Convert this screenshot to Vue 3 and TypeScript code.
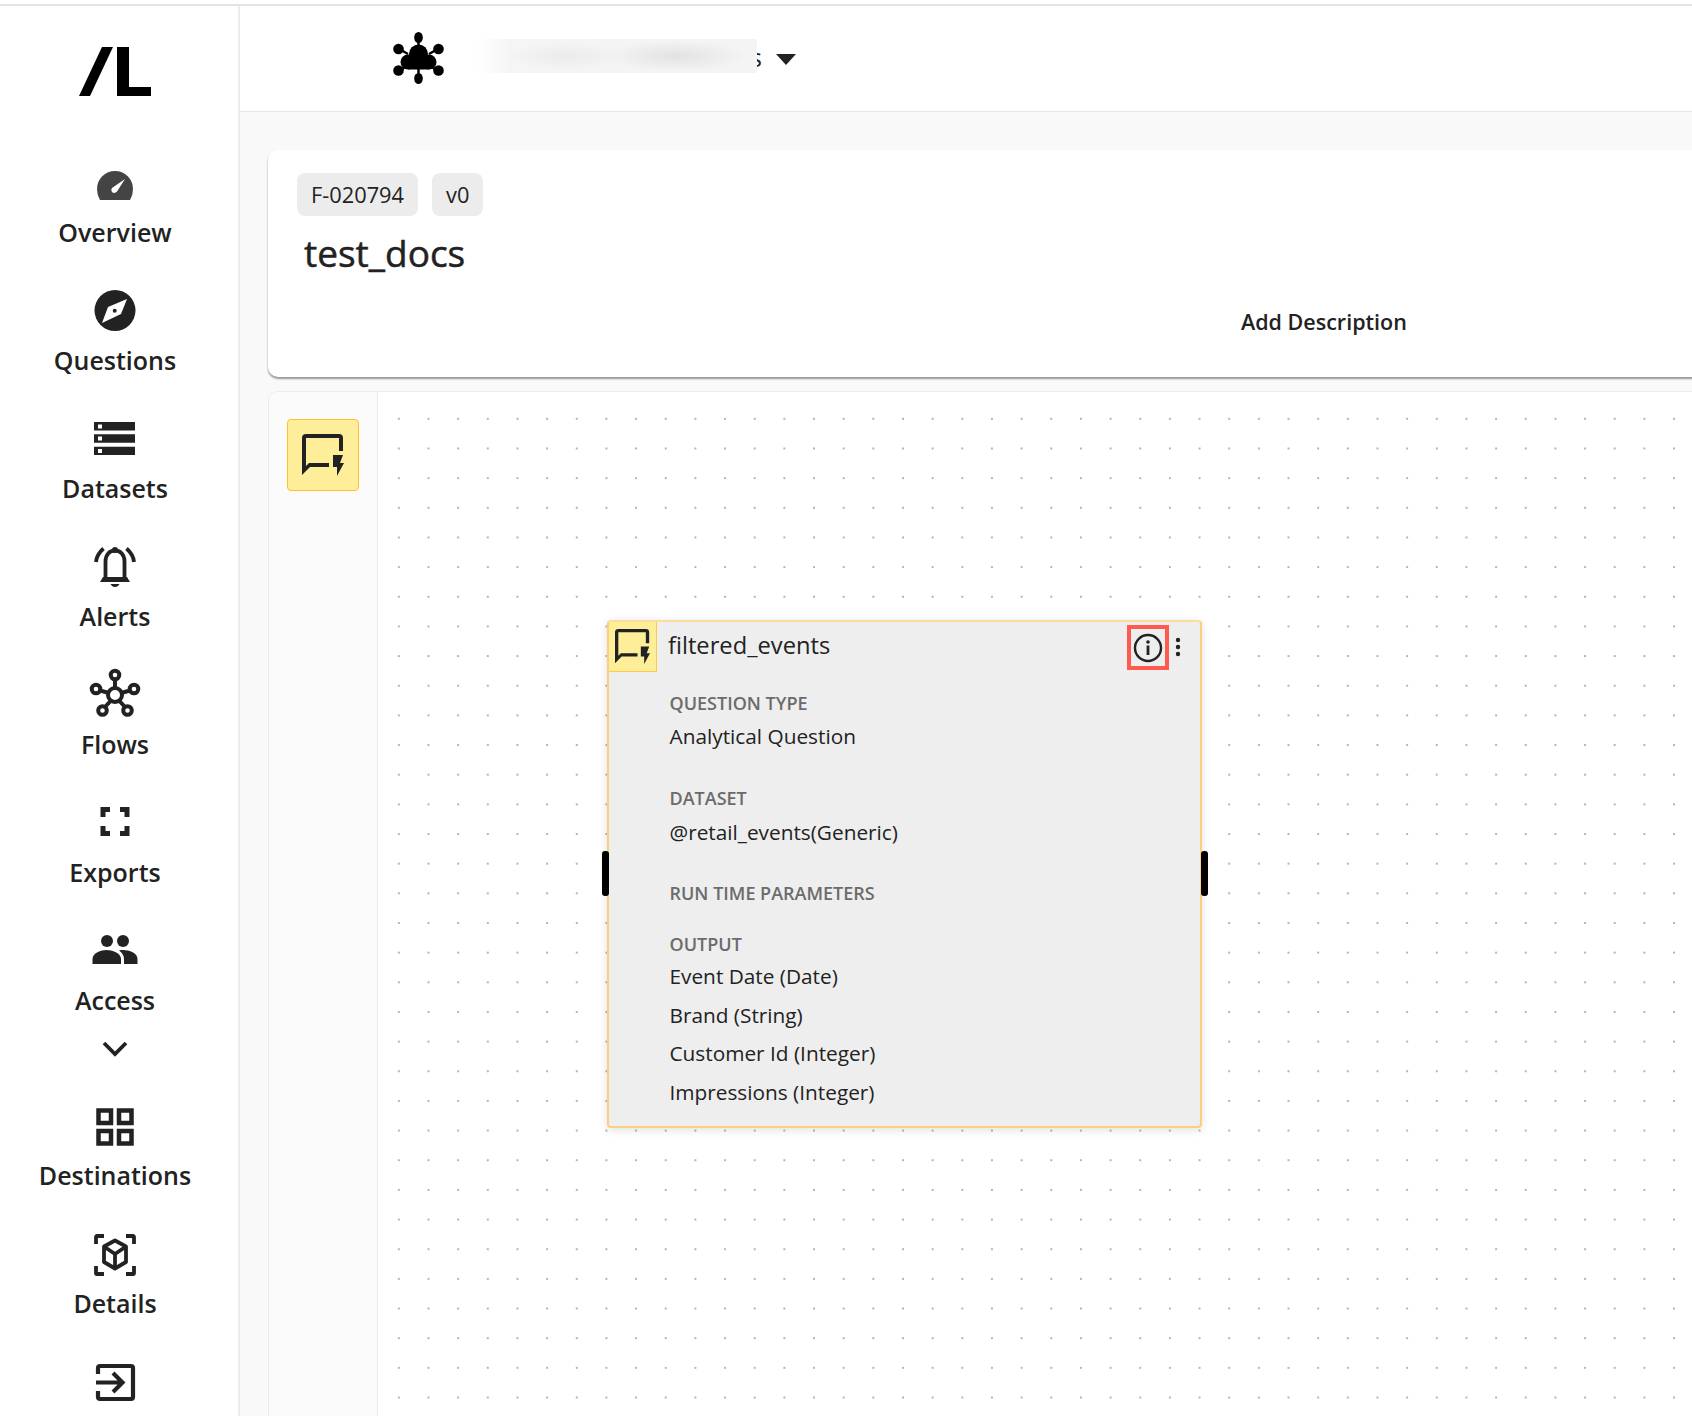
<script setup lang="ts">
const fields = [
  { label: 'QUESTION TYPE', values: ['Analytical Question'], cls: 'f1' },
  { label: 'DATASET', values: ['@retail_events(Generic)'], cls: 'f2' },
  { label: 'RUN TIME PARAMETERS', values: [], cls: 'f3' },
  { label: 'OUTPUT', values: ['Event Date (Date)', 'Brand (String)', 'Customer Id (Integer)', 'Impressions (Integer)'], cls: 'f4' },
]
</script>

<template>
  <div class="root">
    <aside class="sidebar">
      <svg class="logo" width="72" height="49" viewBox="0 0 72 49">
        <path d="M23 0H34L11 49H0Z" fill="#000" />
        <path d="M38 0H50V40H72V49H38Z" fill="#000" />
      </svg>
      <nav class="nav">
        <div class="item">
          <svg class="ico" viewBox="0 0 44 44">
            <path d="M7 40Q4 35 4 29A18 18 0 0 1 40 29Q40 35 37 40Z" fill="#444" />
            <path d="M32 19L24 31.500Q21.500 34 19 32Q17.500 30 19 28Z" fill="#fff" />
          </svg>
          <span>Overview</span>
        </div>
        <div class="item">
          <svg class="ico" viewBox="0 0 44 44">
            <circle cx="22" cy="22.500" r="20.500" fill="#222" />
            <path d="M34 11L28 26L9 35L15 19Z" fill="#fff" />
            <circle cx="21.700" cy="22.800" r="2" fill="#222" />
          </svg>
          <span>Questions</span>
        </div>
        <div class="item">
          <svg class="ico" viewBox="0 0 44 44">
            <path d="M1 6H42V14.500H1ZM5 8.500V12.500H9V8.500ZM1 18.300H42V26.700H1ZM5 20.500V24.500H9V20.500ZM1 30.700H42V39H1ZM5 33V37H9V33Z" fill="#222" fill-rule="evenodd" />
          </svg>
          <span>Datasets</span>
        </div>
        <div class="item">
          <svg class="ico" viewBox="0 0 44 44">
            <g fill="none" stroke="#222" stroke-width="3.800">
              <path d="M12.500 33V17.500C12.500 11 16.500 6.500 22 6.500S31.500 11 31.500 17.500V33" />
              <path d="M3 18C3.500 12 6 8.500 10.500 4.500M41 18C40.500 12 38 8.500 33.500 4.500" />
            </g>
            <circle cx="22" cy="6" r="3" fill="#222" />
            <path d="M7 38L10 33H34L37 38ZM17.500 40H26.500Q25 43 22 43T17.500 40Z" fill="#222" />
          </svg>
          <span>Alerts</span>
        </div>
        <div class="item">
          <svg class="ico" viewBox="0 0 44 44">
            <g fill="none" stroke="#222" stroke-width="4">
              <circle cx="22" cy="23" r="7" />
              <circle cx="22" cy="3" r="4.300" />
              <circle cx="3" cy="17" r="4.300" />
              <circle cx="41" cy="17" r="4.300" />
              <circle cx="9.500" cy="38.500" r="4.300" />
              <circle cx="34.500" cy="38.500" r="4.300" />
              <path d="M22 7V16.500M7 18.500L16 21M37 18.500L28 21M12 35L18 28.500M32 35L26 28.500" />
            </g>
          </svg>
          <span>Flows</span>
        </div>
        <div class="item">
          <svg class="ico" viewBox="0 0 44 44">
            <path d="M7.500 7H17V12H12.500V17H7.500ZM36.500 7V17H31.500V12H27V7ZM7.500 36V26H12.500V31H17V36ZM36.500 36H27V31H31.500V26H36.500Z" fill="#222" />
          </svg>
          <span>Exports</span>
        </div>
        <div class="item">
          <svg class="ico" viewBox="0 0 44 44">
            <circle cx="14" cy="13" r="6" fill="#222" />
            <circle cx="30" cy="13" r="6" fill="#222" />
            <path d="M-0.500 36V31C-0.500 25 8 22 13.500 22S28 25 28 31V36Z" fill="#222" />
            <path d="M31 36V31C31 27 28.500 24.500 26 22.500C33 21 44.500 24 44.500 31V36Z" fill="#222" />
          </svg>
          <span>Access</span>
        </div>
        <svg class="chev" width="26" height="16" viewBox="0 0 26 16">
          <path d="M2 2L13 13L24 2" fill="none" stroke="#222" stroke-width="3.800" />
        </svg>
        <div class="item">
          <svg class="ico" viewBox="0 0 44 44">
            <g fill="none" stroke="#222" stroke-width="4.500">
              <rect x="5.500" y="7.500" width="12.500" height="12.500" />
              <rect x="26" y="7.500" width="12.500" height="12.500" />
              <rect x="5.500" y="28" width="12.500" height="12.500" />
              <rect x="26" y="28" width="12.500" height="12.500" />
            </g>
          </svg>
          <span>Destinations</span>
        </div>
        <div class="item">
          <svg class="ico" viewBox="0 0 44 44">
            <g fill="none" stroke="#222" stroke-width="3.800">
              <path d="M3 13V6Q3 5 4 5H11M41 13V6Q41 5 40 5H33M3 35V42Q3 43 4 43H11M41 35V42Q41 43 40 43H33" />
              <path d="M22 9.500L33 15.500V31L22 37.500L11 31V15.500ZM11 15.500L22 23L33 15.500M22 23V37.500" stroke-linejoin="round" />
            </g>
          </svg>
          <span>Details</span>
        </div>
        <div class="item last">
          <svg class="ico" viewBox="0 0 44 44">
            <g fill="none" stroke="#222" stroke-width="4.200">
              <path d="M5 15V9Q5 7 7 7H38Q40 7 40 9V38Q40 40 38 40H7Q5 40 5 38V32" />
              <path d="M3 23.500H29M20 14L29.500 23.500L20 33" />
            </g>
          </svg>
        </div>
      </nav>
    </aside>

    <main class="main">
      <header class="topbar">
        <svg class="org" width="52" height="52" viewBox="0 0 52 52">
          <g fill="#000">
            <ellipse cx="25.500" cy="5.500" rx="4.300" ry="5.500" />
            <ellipse cx="25.500" cy="46.500" rx="4.300" ry="5.500" />
            <circle cx="5.500" cy="17" r="5.300" />
            <circle cx="45.500" cy="17" r="5.300" />
            <circle cx="5.500" cy="38.500" r="5.300" />
            <circle cx="45.500" cy="38.500" r="5.300" />
            <circle cx="25.500" cy="22" r="9.500" />
            <circle cx="15" cy="30" r="7.500" />
            <circle cx="36" cy="30" r="7.500" />
            <rect x="15" y="26" width="21" height="11.500" />
          </g>
          <path d="M25.500 8V14M25.500 37V44M8 18L15 22M43 18L36 22M8 38L12 35M43 38L39 35" stroke="#000" stroke-width="2.500" />
        </svg>
        <div class="masked">
          <span class="under tail">y</span>
          <span class="under end">s</span>
          <div class="blurred"></div>
        </div>
        <svg class="caret" width="20" height="11" viewBox="0 0 20 11"><path d="M0 0H20L10 11Z" fill="#222" /></svg>
      </header>

      <section class="content">
        <div class="card">
          <div class="badges">
            <span class="badge">F-020794</span>
            <span class="badge">v0</span>
          </div>
          <h1 class="title">test_docs</h1>
          <div class="add">Add Description</div>
        </div>

        <div class="panel">
          <div class="rail">
            <div class="tool">
              <svg width="42" height="42" viewBox="0 0 42 42">
                <path d="M0 41V4Q0 0 4 0H37Q41 0 41 4V17H37V4H4V32L7 29H27V33H8Z" fill="#222" />
                <path d="M31 21H41L38 29H42L35 42V33H31Z" fill="#222" />
              </svg>
            </div>
          </div>
          <div class="canvas">
            <div class="node">
              <span class="handle left"></span>
              <span class="handle right"></span>
              <div class="node-head">
                <div class="node-ico">
                  <svg width="35" height="35" viewBox="0 0 42 42">
                    <path d="M0 41V4Q0 0 4 0H37Q41 0 41 4V17H37V4H4V32L7 29H27V33H8Z" fill="#222" />
                    <path d="M31 21H41L38 29H42L35 42V33H31Z" fill="#222" />
                  </svg>
                </div>
                <span class="node-name">filtered_events</span>
                <div class="info">
                  <svg width="30" height="30" viewBox="0 0 30 30">
                    <circle cx="15" cy="15" r="13" fill="none" stroke="#222" stroke-width="2.400" />
                    <circle cx="15" cy="9" r="1.800" fill="#222" />
                    <rect x="13.600" y="12.500" width="2.800" height="9.500" fill="#222" />
                  </svg>
                </div>
                <svg class="kebab" width="6" height="20" viewBox="0 0 6 20">
                  <circle cx="3" cy="3" r="2.200" fill="#222" />
                  <circle cx="3" cy="10" r="2.200" fill="#222" />
                  <circle cx="3" cy="17" r="2.200" fill="#222" />
                </svg>
              </div>
              <div class="fields">
                <div v-for="f in fields" :key="f.label" class="field" :class="f.cls">
                  <div class="label">{{ f.label }}</div>
                  <div v-for="v in f.values" :key="v" class="value">{{ v }}</div>
                </div>
              </div>
            </div>
          </div>
        </div>
      </section>
    </main>
  </div>
</template>

<style>
html, body { margin: 0; height: 1416px; overflow: hidden; background: #fff; }
</style>

<style scoped>
.root {
  box-sizing: border-box;
  display: flex;
  height: 1416px;
  margin-top: 4px;
  border-top: 2px solid #e4e4e4;
  overflow: hidden;
  font-family: "Open Sans", "Noto Sans", sans-serif;
  color: #222;
}
.sidebar {
  box-sizing: border-box;
  flex: 0 0 240px;
  width: 240px;
  border-right: 2px solid #ececec;
  padding-right: 8px;
  display: flex;
  flex-direction: column;
  align-items: center;
}
.logo { margin: 41px 0 64px; flex: none; }
.nav { display: flex; flex-direction: column; align-items: center; width: 100%; }
.item {
  display: flex;
  flex-direction: column;
  align-items: center;
  height: 128px;
  flex: none;
}
.item span {
  margin-top: 11px;
  font-size: 25px;
  font-weight: 600;
  line-height: 34px;
  white-space: nowrap;
}
.ico { width: 44px; height: 44px; overflow: visible; display: block; flex: none; }
.chev { display: block; margin: -15px 0 46px; flex: none; height: 16px; }
.main { flex: 1; min-width: 0; display: flex; flex-direction: column; overflow: hidden; }
.topbar {
  box-sizing: border-box;
  height: 106px;
  flex: none;
  border-bottom: 1px solid #e6e6e6;
  display: flex;
  align-items: center;
  padding-left: 152px;
}
.org { flex: none; margin: -2px 31px 0 1px; }
.masked {
  position: relative;
  width: 286px;
  height: 34px;
  margin-top: -5px;
  flex: none;
}
.under {
  position: absolute;
  font-size: 25px;
  line-height: 34px;
  top: 1px;
}
.tail { left: 120px; top: 0; }
.end { right: 0; }
.blurred {
  position: absolute;
  left: 0;
  top: 0;
  width: 281px;
  height: 34px;
  background:
    radial-gradient(ellipse 70px 16px at 200px 17px, #e2e2e2, transparent),
    radial-gradient(ellipse 60px 14px at 90px 17px, #ebebeb, transparent),
    linear-gradient(90deg, #fff, #f5f5f5 12%, #f4f4f4);
}
.caret { margin: 2px 0 0 14px; }
.content {
  flex: 1;
  min-height: 0;
  background: #f9f9f9;
  padding: 38px 0 0 28px;
  display: flex;
  flex-direction: column;
}
.card {
  box-sizing: border-box;
  flex: none;
  height: 227px;
  margin-right: -20px;
  padding: 23px 0 0 29px;
  background: #fff;
  border-radius: 10px;
  box-shadow: 0 2px 2px rgba(0, 0, 0, 0.4);
}
.badges { display: flex; gap: 14px; }
.badge {
  box-sizing: border-box;
  height: 43px;
  padding: 0 14px;
  display: flex;
  align-items: center;
  font-size: 21.800px;
  background: #ececec;
  border-radius: 8px;
}
.title {
  margin: 15px 0 0 7px;
  font-size: 37px;
  font-weight: 400;
  -webkit-text-stroke: 0.5px #222;
  line-height: 44px;
}
.add {
  margin: 32px 0 0 944px;
  font-size: 21.500px;
  font-weight: 600;
  line-height: 30px;
}
.panel {
  flex: 1;
  min-height: 0;
  margin: 14px -20px 0 0;
  display: flex;
  background: #fff;
  border: 1px solid #ececec;
  border-radius: 10px 0 0 0;
  overflow: hidden;
}
.rail {
  box-sizing: border-box;
  flex: 0 0 109px;
  background: #fbfbfb;
  border-right: 1px solid #ececec;
  padding: 27px 0 0 18px;
}
.tool {
  box-sizing: border-box;
  width: 72px;
  height: 72px;
  display: flex;
  align-items: center;
  justify-content: center;
  background: #ffee99;
  border: 1px solid #ffc02e;
  border-radius: 4px;
}
.canvas {
  flex: 1;
  position: relative;
  background-color: #fff;
  background-image: radial-gradient(circle, #b4b4b4 1px, transparent 1.4px);
  background-size: 29.670px 29.670px;
  background-position: 6px 12px;
}
.node {
  box-sizing: border-box;
  position: absolute;
  left: 229px;
  top: 228px;
  width: 595px;
  height: 508px;
  background: #eeeeee;
  border: 2px solid #fbcf7c;
  border-top-color: #fddc9c;
  border-radius: 4px;
  box-shadow: 0 2px 10px rgba(0, 0, 0, 0.12);
}
.handle {
  position: absolute;
  top: 229px;
  width: 7px;
  height: 45px;
  background: #000;
  border-radius: 3px;
}
.handle.left { left: -7.500px; }
.handle.right { right: -8px; }
.node-head { display: flex; align-items: flex-start; height: 50px; }
.node-ico {
  box-sizing: border-box;
  width: 48px;
  height: 50px;
  display: flex;
  align-items: center;
  justify-content: center;
  background: #ffee99;
  border-right: 1px solid #ffc94d;
  border-bottom: 1px solid #ffc94d;
}
.node-name {
  margin: 6px 0 0 11px;
  font-size: 23.700px;
  line-height: 34px;
  flex: 1;
}
.info {
  box-sizing: border-box;
  width: 42px;
  height: 45px;
  margin: 3px 0 0;
  border: 4px solid #ff5a4f;
  display: flex;
  align-items: center;
  justify-content: center;
}
.kebab { margin: 15px 19px 0 6px; }
.fields { padding: 16px 0 0 60.500px; }
.label {
  font-size: 18px;
  font-weight: 600;
  line-height: 30px;
  color: #6b6b6b;
}
.value {
  font-size: 20.800px;
  line-height: 30px;
  margin-top: 8.500px;
}
.f1 .value { margin-top: 3px; }
.f2 .value { margin-top: 4px; }
.f2 { margin-top: 32px; }
.f3 { margin-top: 31px; }
.f4 { margin-top: 21px; }
.f4 .label + .value { margin-top: 2px; }
</style>
